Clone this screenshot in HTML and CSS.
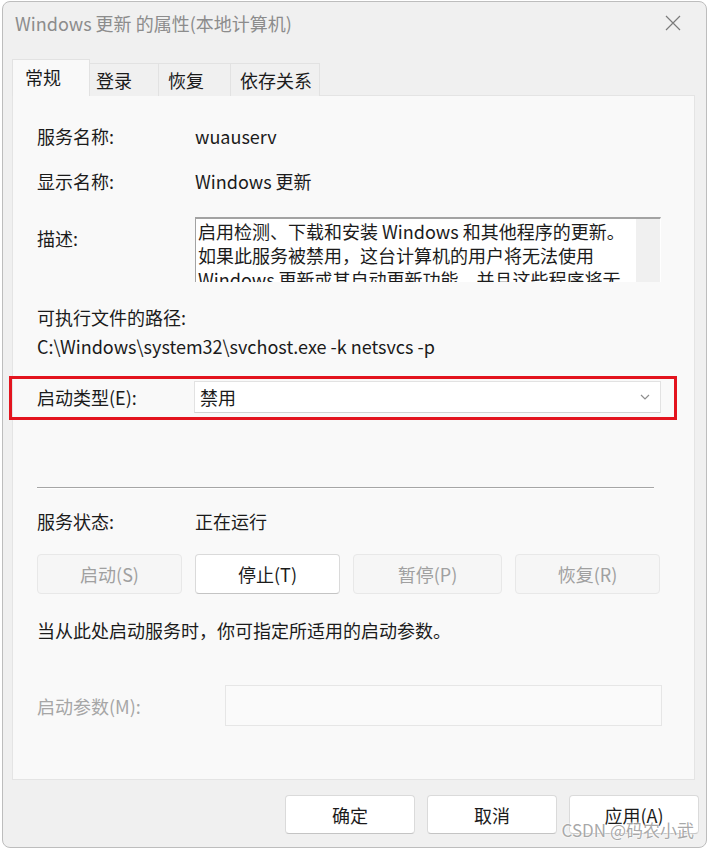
FILE: index.html
```html
<!DOCTYPE html>
<html lang="zh-CN">
<head>
  <meta charset="UTF-8" />
  <meta name="viewport" content="width=device-width, initial-scale=1.0" />
  <title>Windows 更新 的属性(本地计算机)</title>
  <link rel="stylesheet" href="styles.css">
</head>
<body>
  <div class="window">
    <div class="titlebar">
      <span class="title">Windows 更新 的属性(本地计算机)</span>
      <svg class="close" width="16" height="16" viewBox="0 0 16 16">
        <path d="M1 1 L15 15 M15 1 L1 15" stroke="#7b7b7b" stroke-width="1.2" fill="none" />
      </svg>
    </div>

    <div class="tabs">
      <div class="tab tab-general active">常规</div>
      <div class="tab tab-logon">登录</div>
      <div class="tab tab-recovery">恢复</div>
      <div class="tab tab-deps">依存关系</div>
    </div>

    <div class="panel">
      <div class="row first">
        <span class="label">服务名称:</span>
        <span class="value">wuauserv</span>
      </div>
      <div class="row">
        <span class="label">显示名称:</span>
        <span class="value">Windows 更新</span>
      </div>
      <div class="row desc-row">
        <span class="label desc-label">描述:</span>
        <div class="desc-box">
          <div class="desc-text">启用检测、下载和安装 Windows 和其他程序的更新。如果此服务被禁用，这台计算机的用户将无法使用 Windows 更新或其自动更新功能，并且这些程序将无法使用 Windows 更新代理(WUA) API。</div>
          <div class="scrollbar"></div>
        </div>
      </div>

      <div class="path-label">可执行文件的路径:</div>
      <div class="path">C:\Windows\system32\svchost.exe -k netsvcs -p</div>

      <div class="highlight">
        <span class="label">启动类型(E):</span>
        <div class="combo">
          <span>禁用</span>
          <svg width="10" height="6" viewBox="0 0 10 6">
            <path d="M1 1 L5 5 L9 1" stroke="#8e8e8e" stroke-width="1.2" fill="none" />
          </svg>
        </div>
      </div>

      <div class="separator"></div>

      <div class="row status-row">
        <span class="label">服务状态:</span>
        <span class="value">正在运行</span>
      </div>

      <div class="service-buttons">
        <button class="btn disabled">启动(S)</button>
        <button class="btn">停止(T)</button>
        <button class="btn disabled">暂停(P)</button>
        <button class="btn disabled">恢复(R)</button>
      </div>

      <div class="hint">当从此处启动服务时，你可指定所适用的启动参数。</div>

      <div class="param-row">
        <span class="param-label">启动参数(M):</span>
        <div class="param-input"></div>
      </div>
    </div>

    <div class="footer">
      <button class="btn footer-btn">确定</button>
      <button class="btn footer-btn">取消</button>
      <button class="btn footer-btn">应用(A)</button>
    </div>

    <div class="watermark">CSDN @码农小武</div>
  </div>
</body>
</html>
```

FILE: styles.css
```css
body {
  margin: 0;
  background: #fff;
  font-family: "Noto Sans CJK SC", "Noto Sans", sans-serif;
  font-size: 18px;
  color: #1b1b1b;
}
.window {
  position: relative;
  box-sizing: border-box;
  width: 705px;
  height: 847px;
  margin: 1px 0 0 2px;
  border: 1px solid #bdbdbd;
  border-radius: 8px;
  background: #f0f0f0;
  overflow: hidden;
}
.titlebar {
  height: 42px;
  padding: 0 25px 0 12px;
  display: flex;
  align-items: center;
  justify-content: space-between;
}
.title {
  color: #8c8c8c;
  line-height: 24px;
}
.tabs {
  position: relative;
  z-index: 1;
  display: flex;
  align-items: flex-end;
  margin: 15px 0 -1px 9px;
}
.tab {
  box-sizing: border-box;
  height: 33px;
  display: flex;
  align-items: center;
  padding-bottom: 1px;
  background: #f0f0f0;
  border: 1px solid #e2e2e2;
  border-bottom: none;
  border-left: none;
}
.tab.active {
  height: 37px;
  padding-bottom: 2px;
  background: #f9f9f9;
  border-left: 1px solid #e2e2e2;
}
.tab-general { width: 78px; padding-left: 12px; }
.tab-logon { width: 69px; padding-left: 6px; }
.tab-recovery { width: 72px; padding-left: 9px; }
.tab-deps { width: 89px; padding-left: 9px; }

.panel {
  box-sizing: border-box;
  height: 685px;
  margin: 0 11px 0 9px;
  padding: 28px 32px 0 24px;
  background: #f9f9f9;
  border: 1px solid #e4e4e4;
}
.row {
  display: flex;
  line-height: 24px;
  margin-top: 21px;
}
.row.first {
  margin-top: 0;
}
.label {
  width: 158px;
  flex-shrink: 0;
}
.desc-row {
  margin-top: 24px;
}
.desc-label {
  margin-top: 9px;
}
.desc-box {
  box-sizing: border-box;
  width: 466px;
  height: 65px;
  display: flex;
  background: #fff;
  border-top: 2px solid #a3a3a3;
  border-left: 1px solid #a3a3a3;
  border-right: 1px solid #fff;
}
.desc-text {
  flex: 1;
  overflow: hidden;
  padding-left: 2px;
  line-height: 24px;
}
.scrollbar {
  width: 24px;
  background: #f0f0f0;
}
.path-label {
  margin-top: 23px;
  line-height: 24px;
}
.path {
  margin-top: 5px;
  line-height: 24px;
}
.highlight {
  box-sizing: border-box;
  display: flex;
  align-items: center;
  width: 668px;
  height: 44px;
  margin: 18px 0 0 -28px;
  padding: 0 13px 2px 25px;
  border: 3px solid #e3141e;
}
.highlight .label {
  width: 157px;
}
.combo {
  box-sizing: border-box;
  width: 468px;
  height: 32px;
  display: flex;
  align-items: center;
  justify-content: space-between;
  padding: 0 10px 0 5px;
  background: #fff;
  border: 1px solid #e2e2e2;
  border-bottom-color: #d2d2d2;
}
.separator {
  width: 617px;
  height: 0;
  margin-top: 67px;
  border-top: 1px solid #a6a6a6;
  border-bottom: 1px solid #fff;
}
.status-row {
  margin-top: 20px;
}
.service-buttons {
  display: grid;
  grid-template-columns: 145px 145px 149px 145px;
  gap: 13px;
  width: 624px;
  margin-top: 21px;
}
.btn {
  box-sizing: border-box;
  height: 40px;
  font-family: inherit;
  font-size: 18px;
  color: #1b1b1b;
  background: #fff;
  border: 1px solid #dadada;
  border-bottom-color: #c4c4c4;
  border-radius: 4px;
  padding: 0;
}
.btn.disabled {
  color: #a0a0a0;
  background: #f6f6f6;
  border: 1px solid #e8e8e8;
}
.hint {
  margin-top: 24px;
  line-height: 24px;
}
.param-row {
  display: flex;
  align-items: center;
  margin-top: 43px;
}
.param-label {
  width: 188px;
  color: #a6a6a6;
  line-height: 24px;
}
.param-input {
  box-sizing: border-box;
  width: 437px;
  height: 41px;
  background: #fafafa;
  border: 1px solid #e6e6e6;
}
.footer {
  display: flex;
  justify-content: flex-end;
  gap: 12px;
  padding: 15px 7px 0 0;
}
.footer-btn {
  width: 130px;
  height: 39px;
}
.watermark {
  position: absolute;
  right: 12px;
  bottom: 5px;
  font-size: 17px;
  color: rgba(140, 140, 140, 0.75);
  text-shadow: 0 0 2px #fff, 0 0 2px #fff;
  font-family: "Noto Sans CJK SC", "Liberation Sans", sans-serif;
}
```
